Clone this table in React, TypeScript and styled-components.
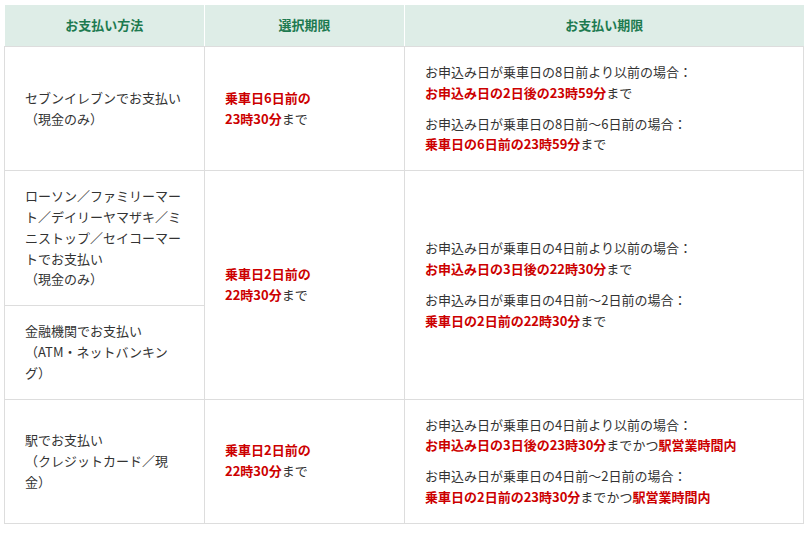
import React from 'react';
import styled, { createGlobalStyle } from 'styled-components';

const GlobalStyle = createGlobalStyle`
  body {
    margin: 0;
    background: #fff;
    font-family: "Noto Sans CJK JP", "Noto Sans", sans-serif;
    color: #333;
  }
`;

const Wrapper = styled.div`
  padding: 5px 4px;
`;

const Table = styled.table`
  width: 800px;
  border-collapse: collapse;
  table-layout: fixed;
  font-size: 13px;
  line-height: 20.8px;
`;

const Col = styled.col<{ $w?: number }>`
  width: ${p => (p.$w ? `${p.$w}px` : 'auto')};
`;

const HeadCell = styled.th`
  background: #deede7;
  color: #1d7a50;
  font-weight: bold;
  height: 41px;
  padding: 0;
  text-align: center;
  border-left: 1px solid #fff;
  border-bottom: 1px solid #ddd;
  &:first-child {
    border-left: none;
  }
`;

const Cell = styled.td`
  border: 1px solid #ddd;
  padding: 15px 20px;
  vertical-align: middle;
  text-align: left;
`;

const Red = styled.span`
  color: #cc0000;
  font-weight: bold;
`;

const Para = styled.p<{ $last?: boolean }>`
  margin: 0 0 ${p => (p.$last ? 0 : 10)}px;
`;

type Limit = { cond: string; main: string; extra?: boolean };

const Limits: React.FC<{ items: Limit[] }> = ({ items }) => (
  <>
    {items.map((it, i) => (
      <Para key={i} $last={i === items.length - 1}>
        {it.cond}
        <br />
        <Red>{it.main}</Red>まで
        {it.extra && (
          <>
            かつ<Red>駅営業時間内</Red>
          </>
        )}
      </Para>
    ))}
  </>
);

const Choice: React.FC<{ day: string; time: string }> = ({ day, time }) => (
  <>
    <Red>乗車日{day}日前の</Red>
    <br />
    <Red>{time}</Red>まで
  </>
);

const App: React.FC = () => (
  <Wrapper>
    <GlobalStyle />
    <Table>
      <colgroup>
        <Col $w={200} />
        <Col $w={200} />
        <Col />
      </colgroup>
      <thead>
        <tr>
          <HeadCell>お支払い方法</HeadCell>
          <HeadCell>選択期限</HeadCell>
          <HeadCell>お支払い期限</HeadCell>
        </tr>
      </thead>
      <tbody>
        <tr>
          <Cell>
            セブンイレブンでお支払い
            <br />（現金のみ）
          </Cell>
          <Cell>
            <Choice day="6" time="23時30分" />
          </Cell>
          <Cell>
            <Limits
              items={[
                { cond: 'お申込み日が乗車日の8日前より以前の場合：', main: 'お申込み日の2日後の23時59分' },
                { cond: 'お申込み日が乗車日の8日前〜6日前の場合：', main: '乗車日の6日前の23時59分' },
              ]}
            />
          </Cell>
        </tr>
        <tr>
          <Cell>
            ローソン／ファミリーマート／デイリーヤマザキ／ミニストップ／セイコーマートでお支払い
            <br />（現金のみ）
          </Cell>
          <Cell rowSpan={2}>
            <Choice day="2" time="22時30分" />
          </Cell>
          <Cell rowSpan={2}>
            <Limits
              items={[
                { cond: 'お申込み日が乗車日の4日前より以前の場合：', main: 'お申込み日の3日後の22時30分' },
                { cond: 'お申込み日が乗車日の4日前〜2日前の場合：', main: '乗車日の2日前の22時30分' },
              ]}
            />
          </Cell>
        </tr>
        <tr>
          <Cell>
            金融機関でお支払い
            <br />（ATM・ネットバンキング）
          </Cell>
        </tr>
        <tr>
          <Cell>
            駅でお支払い
            <br />（クレジットカード／現金）
          </Cell>
          <Cell>
            <Choice day="2" time="22時30分" />
          </Cell>
          <Cell>
            <Limits
              items={[
                { cond: 'お申込み日が乗車日の4日前より以前の場合：', main: 'お申込み日の3日後の23時30分', extra: true },
                { cond: 'お申込み日が乗車日の4日前〜2日前の場合：', main: '乗車日の2日前の23時30分', extra: true },
              ]}
            />
          </Cell>
        </tr>
      </tbody>
    </Table>
  </Wrapper>
);

export default App;
